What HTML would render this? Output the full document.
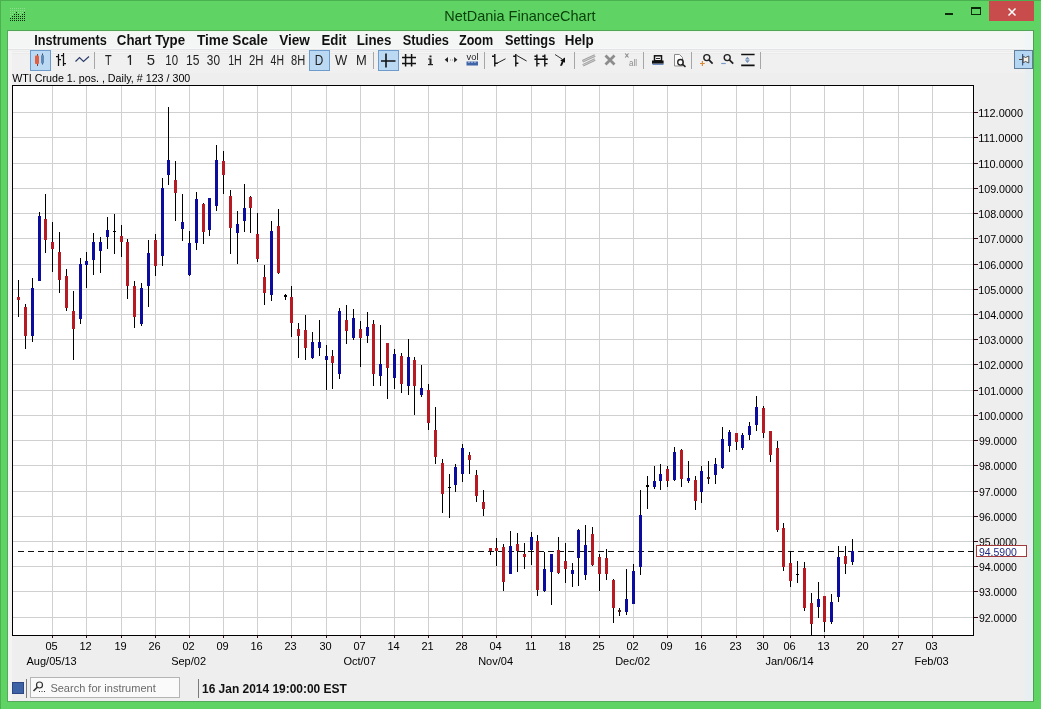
<!DOCTYPE html>
<html><head><meta charset="utf-8"><style>
html,body{margin:0;padding:0;width:1041px;height:709px;overflow:hidden;background:#5fd464;}
svg{position:absolute;left:0;top:0;display:block;will-change:transform}
svg text{font-family:"Liberation Sans", sans-serif;}
</style></head><body>
<svg width="1041" height="709" viewBox="0 0 1041 709">
<rect x="0" y="0" width="1041" height="709" fill="#5fd464"/>
<rect x="0" y="0" width="1041" height="1" fill="#4bb050"/>
<rect x="0" y="0" width="1" height="709" fill="#4bb050"/>
<rect x="8" y="30" width="1025" height="1" fill="#52a456"/>
<rect x="8" y="31" width="1025" height="670" fill="#eeeeee"/>
<rect x="7" y="30" width="1" height="672" fill="#56a85a"/>
<rect x="1033" y="30" width="1" height="672" fill="#4f9f53"/>
<rect x="7" y="701" width="1027" height="1" fill="#56a85a"/>
<rect x="10" y="8" width="1" height="1" fill="#8ee08e"/>
<rect x="12" y="8" width="1" height="1" fill="#8ee08e"/>
<rect x="14" y="8" width="1" height="1" fill="#8ee08e"/>
<rect x="16" y="8" width="1" height="1" fill="#8ee08e"/>
<rect x="18" y="8" width="1" height="1" fill="#8ee08e"/>
<rect x="20" y="8" width="1" height="1" fill="#8ee08e"/>
<rect x="22" y="8" width="1" height="1" fill="#8ee08e"/>
<rect x="24" y="8" width="1" height="1" fill="#8ee08e"/>
<rect x="10" y="10" width="1" height="1" fill="#8ee08e"/>
<rect x="12" y="10" width="1" height="1" fill="#8ee08e"/>
<rect x="14" y="10" width="1" height="1" fill="#8ee08e"/>
<rect x="16" y="10" width="1" height="1" fill="#8ee08e"/>
<rect x="18" y="10" width="1" height="1" fill="#8ee08e"/>
<rect x="20" y="10" width="1" height="1" fill="#8ee08e"/>
<rect x="22" y="10" width="1" height="1" fill="#8ee08e"/>
<rect x="24" y="10" width="1" height="1" fill="#8ee08e"/>
<rect x="10" y="12" width="1" height="1" fill="#8ee08e"/>
<rect x="12" y="12" width="1" height="1" fill="#8ee08e"/>
<rect x="14" y="12" width="1" height="1" fill="#8ee08e"/>
<rect x="18" y="12" width="1" height="1" fill="#8ee08e"/>
<rect x="20" y="12" width="1" height="1" fill="#8ee08e"/>
<rect x="22" y="12" width="1" height="1" fill="#8ee08e"/>
<rect x="10" y="14" width="1" height="1" fill="#8ee08e"/>
<rect x="12" y="14" width="1" height="1" fill="#8ee08e"/>
<rect x="20" y="14" width="1" height="1" fill="#8ee08e"/>
<rect x="10" y="16" width="1" height="1" fill="#8ee08e"/>
<rect x="16" y="12" width="1" height="1" fill="#022802"/>
<rect x="24" y="12" width="1" height="1" fill="#022802"/>
<rect x="14" y="14" width="1" height="1" fill="#022802"/>
<rect x="16" y="14" width="1" height="1" fill="#022802"/>
<rect x="18" y="14" width="1" height="1" fill="#022802"/>
<rect x="22" y="14" width="1" height="1" fill="#022802"/>
<rect x="24" y="14" width="1" height="1" fill="#022802"/>
<rect x="12" y="16" width="1" height="1" fill="#022802"/>
<rect x="14" y="16" width="1" height="1" fill="#022802"/>
<rect x="16" y="16" width="1" height="1" fill="#022802"/>
<rect x="18" y="16" width="1" height="1" fill="#022802"/>
<rect x="20" y="16" width="1" height="1" fill="#022802"/>
<rect x="22" y="16" width="1" height="1" fill="#022802"/>
<rect x="24" y="16" width="1" height="1" fill="#022802"/>
<rect x="10" y="18" width="1" height="1" fill="#022802"/>
<rect x="12" y="18" width="1" height="1" fill="#022802"/>
<rect x="14" y="18" width="1" height="1" fill="#022802"/>
<rect x="16" y="18" width="1" height="1" fill="#022802"/>
<rect x="18" y="18" width="1" height="1" fill="#022802"/>
<rect x="20" y="18" width="1" height="1" fill="#022802"/>
<rect x="22" y="18" width="1" height="1" fill="#022802"/>
<rect x="24" y="18" width="1" height="1" fill="#022802"/>
<rect x="10" y="20" width="1" height="1" fill="#022802"/>
<rect x="12" y="20" width="1" height="1" fill="#022802"/>
<rect x="14" y="20" width="1" height="1" fill="#022802"/>
<rect x="16" y="20" width="1" height="1" fill="#022802"/>
<rect x="18" y="20" width="1" height="1" fill="#022802"/>
<rect x="20" y="20" width="1" height="1" fill="#022802"/>
<rect x="22" y="20" width="1" height="1" fill="#022802"/>
<rect x="24" y="20" width="1" height="1" fill="#022802"/>
<rect x="945" y="13" width="8" height="2" fill="#0a2a0a"/>
<rect x="971.5" y="7.5" width="9" height="7" fill="none" stroke="#0a2a0a" stroke-width="1"/>
<rect x="971" y="7" width="10" height="2" fill="#0a2a0a"/>
<rect x="989" y="1" width="45" height="20" fill="#c94c4c"/>
<path d="M1008.5 8.5 L1015.5 15.5 M1015.5 8.5 L1008.5 15.5" stroke="#fff" stroke-width="1.5"/>
<rect x="8" y="31" width="1025" height="18" fill="#f4f6f5"/>
<rect x="8" y="31" width="1025" height="1" fill="#eef8ea"/>
<rect x="8" y="49" width="1025" height="1" fill="#e3e4e5"/>
<rect x="8" y="51" width="1025" height="22" fill="#f0f0f0"/>
<rect x="8" y="48" width="1025" height="1" fill="#f7f8f8"/>
<rect x="8" y="50" width="1025" height="1" fill="#f2f2f2"/>
<rect x="8" y="51" width="1025" height="1" fill="#ececec"/>
<rect x="8" y="52" width="1025" height="1" fill="#f5f5f5"/>
<rect x="8" y="53" width="1025" height="1" fill="#eaeaea"/>
<rect x="1025" y="31" width="8" height="670" fill="#e8eff2"/>
<rect x="1025" y="31" width="8" height="18" fill="#f0f6f8"/>
<rect x="30.5" y="50.5" width="20" height="20" fill="#bcd9f4" stroke="#6d9bcb" stroke-width="1"/>
<rect x="309.5" y="50.5" width="20" height="20" fill="#bcd9f4" stroke="#6d9bcb" stroke-width="1"/>
<rect x="378.5" y="50.5" width="20" height="20" fill="#bcd9f4" stroke="#6d9bcb" stroke-width="1"/>
<rect x="1014.5" y="50.5" width="18" height="18" fill="#b4d6f2" stroke="#5f7f9c" stroke-width="1"/>
<rect x="94" y="52" width="1" height="17" fill="#a6a6a6"/>
<rect x="373" y="52" width="1" height="17" fill="#a6a6a6"/>
<rect x="484" y="52" width="1" height="17" fill="#a6a6a6"/>
<rect x="574" y="52" width="1" height="17" fill="#a6a6a6"/>
<rect x="643" y="52" width="1" height="17" fill="#a6a6a6"/>
<rect x="691" y="52" width="1" height="17" fill="#a6a6a6"/>
<rect x="760" y="52" width="1" height="17" fill="#a6a6a6"/>
<rect x="37" y="54" width="1" height="12" fill="#7a3a30"/><rect x="35" y="55.5" width="4" height="8.5" rx="1" fill="#e2603f"/>
<rect x="42" y="53.5" width="1" height="11" fill="#3a4a6a"/><rect x="41" y="55" width="3" height="8.5" rx="1" fill="#5f8ab8"/>
<path d="M58.5 54 V66 M56 56.5 H58.5 M58.5 59.5 H61 M63.5 53 V66 M61 55.5 H63.5 M63.5 63.5 H66" stroke="#111" stroke-width="1.25" fill="none"/>
<path d="M75.5 61.5 L79.5 57.5 L83.5 61.5 L89 56.5" stroke="#2a3c68" stroke-width="1.15" fill="none"/>
<path d="M381 61 H395.5 M386 53.5 V67.5" stroke="#111" stroke-width="1.6"/>
<path d="M405.6 54 V66.6 M411.6 54 V66.6 M402 57.5 H416 M402 63.5 H416" stroke="#111" stroke-width="1.5"/>
<rect x="429.5" y="55.5" width="2" height="1.8" fill="#222"/><rect x="429.5" y="58.5" width="2" height="6.5" fill="#222"/><rect x="428" y="64" width="5" height="1.2" fill="#222"/><rect x="428" y="58.5" width="2" height="1" fill="#222"/>
<path d="M444.7 59.7 L448 57 V62.4 Z M457.4 59.7 L454.1 57 V62.4 Z" fill="#222"/><rect x="450" y="59.5" width="1" height="1" fill="#888"/><rect x="452" y="59.5" width="1" height="1" fill="#888"/>
<text x="472.5" y="59.5" font-size="8.5" text-anchor="middle" fill="#222" font-family='"Liberation Sans", sans-serif' textLength="12" lengthAdjust="spacingAndGlyphs">vol</text>
<rect x="466.5" y="61.5" width="11.5" height="4" fill="#3f64a8"/><path d="M469 61.5 V63 M472 61.5 V63 M475 61.5 V63" stroke="#e8eef8" stroke-width="0.9"/>
<path d="M494.8 54 V66.5 M492 56.2 H494.8 M494.8 63.2 H497.7" stroke="#111" stroke-width="1.4" fill="none"/><path d="M496.5 63.5 L505.5 58.8" stroke="#222" stroke-width="1"/>
<path d="M515.8 54 V66.5 M513.2 56.2 H515.8 M515.8 63.2 H518.4" stroke="#111" stroke-width="1.4" fill="none"/><path d="M516.5 55.3 L526.6 61" stroke="#222" stroke-width="1"/>
<path d="M536.9 54.5 V66.5 M544.8 54.5 V66.5 M534.4 59.2 H547.8 M534.4 56.2 H536.9 M542.3 56.2 H544.8 M536.9 63.6 H539.5 M544.8 63.6 H547.5" stroke="#111" stroke-width="1.4" fill="none"/>
<path d="M555 54.5 L562 59" stroke="#222" stroke-width="0.9"/><path d="M565 57.5 L560.2 60.5 L561.8 61.3 L560 65.7 L562 65.7 L563.6 62 L565 62.8 Z" fill="#111"/>
<path d="M582.5 61.3 L595 55.5 M582.9 65.3 L595 59.5" stroke="#a0a0a0" stroke-width="2.6"/><path d="M582.5 61.3 L595 55.5 M582.9 65.3 L595 59.5" stroke="#dcdcdc" stroke-width="0.7"/>
<path d="M605.5 55.5 L614.5 64.5 M614.5 55.5 L605.5 64.5" stroke="#8c8c8c" stroke-width="2.8"/>
<path d="M625.2 53.5 L628.5 57.5 M628.5 53.5 L625.2 57.5" stroke="#8a8a8a" stroke-width="1.1"/>
<text x="629" y="66" font-size="9.5" fill="#8a8a8a" font-family='"Liberation Sans", sans-serif' textLength="8" lengthAdjust="spacingAndGlyphs">all</text>
<rect x="654.5" y="55.8" width="7" height="5" fill="#f4f4f4" stroke="#111" stroke-width="1.5"/><rect x="652" y="60.5" width="11.6" height="3.2" fill="#111"/><rect x="656" y="58" width="4" height="0.9" fill="#111"/><rect x="652.5" y="63.7" width="11" height="1.3" fill="#6a8ac0"/>
<path d="M674.5 54.5 H679.5 L682.5 57.5 V66 H674.5 Z" fill="#fbfbfb" stroke="#8a8a8a" stroke-width="1"/>
<circle cx="680.5" cy="62.3" r="2.8" fill="none" stroke="#222" stroke-width="1.3"/><path d="M682.6 64.4 L685.5 66.8" stroke="#222" stroke-width="1.6"/>
<circle cx="706.8" cy="57.6" r="3" fill="none" stroke="#222" stroke-width="1.4"/><path d="M709 59.8 L712.6 63.6" stroke="#222" stroke-width="1.7"/>
<path d="M700 63.5 H704.8 M702.4 61 V66" stroke="#d88a3a" stroke-width="1.2"/>
<circle cx="727.2" cy="57.6" r="3" fill="none" stroke="#222" stroke-width="1.4"/><path d="M729.4 59.8 L733.2 63.6" stroke="#222" stroke-width="1.7"/>
<path d="M721.2 63.5 H725.8" stroke="#7898c8" stroke-width="1.2"/>
<path d="M741.2 54.5 H754.6 M741.2 65.3 H754.6" stroke="#111" stroke-width="1.7"/><path d="M747.4 56.8 L745 59.5 H749.8 Z M747.4 63 L745 60.3 H749.8 Z" fill="#7090b8"/>
<path d="M1019 59.5 H1022.5" stroke="#5a4a40" stroke-width="1"/><rect x="1022" y="54" width="1.2" height="11.4" fill="#3a5a80"/>
<path d="M1023.2 56.2 L1025.5 57.5 L1028.8 56 V63 L1025.5 61.5 L1023.2 62.8 Z" fill="#f4f0e6" stroke="#444" stroke-width="0.9"/>
<rect x="8" y="51" width="1" height="650" fill="#eef6ee"/>
<rect x="9" y="51" width="3" height="650" fill="#f4f4f4"/>
<rect x="12" y="85" width="961" height="550" fill="#fff"/>
<rect x="52" y="86" width="1" height="549" fill="#d0d0d0"/>
<rect x="86" y="86" width="1" height="549" fill="#d0d0d0"/>
<rect x="121" y="86" width="1" height="549" fill="#d0d0d0"/>
<rect x="155" y="86" width="1" height="549" fill="#d0d0d0"/>
<rect x="189" y="86" width="1" height="549" fill="#d0d0d0"/>
<rect x="223" y="86" width="1" height="549" fill="#d0d0d0"/>
<rect x="257" y="86" width="1" height="549" fill="#d0d0d0"/>
<rect x="291" y="86" width="1" height="549" fill="#d0d0d0"/>
<rect x="326" y="86" width="1" height="549" fill="#d0d0d0"/>
<rect x="360" y="86" width="1" height="549" fill="#d0d0d0"/>
<rect x="394" y="86" width="1" height="549" fill="#d0d0d0"/>
<rect x="428" y="86" width="1" height="549" fill="#d0d0d0"/>
<rect x="462" y="86" width="1" height="549" fill="#d0d0d0"/>
<rect x="496" y="86" width="1" height="549" fill="#d0d0d0"/>
<rect x="531" y="86" width="1" height="549" fill="#d0d0d0"/>
<rect x="565" y="86" width="1" height="549" fill="#d0d0d0"/>
<rect x="599" y="86" width="1" height="549" fill="#d0d0d0"/>
<rect x="633" y="86" width="1" height="549" fill="#d0d0d0"/>
<rect x="667" y="86" width="1" height="549" fill="#d0d0d0"/>
<rect x="701" y="86" width="1" height="549" fill="#d0d0d0"/>
<rect x="736" y="86" width="1" height="549" fill="#d0d0d0"/>
<rect x="763" y="86" width="1" height="549" fill="#d0d0d0"/>
<rect x="790" y="86" width="1" height="549" fill="#d0d0d0"/>
<rect x="824" y="86" width="1" height="549" fill="#d0d0d0"/>
<rect x="863" y="86" width="1" height="549" fill="#d0d0d0"/>
<rect x="898" y="86" width="1" height="549" fill="#d0d0d0"/>
<rect x="932" y="86" width="1" height="549" fill="#d0d0d0"/>
<rect x="13" y="112" width="960" height="1" fill="#d0d0d0"/>
<rect x="13" y="137" width="960" height="1" fill="#d0d0d0"/>
<rect x="13" y="163" width="960" height="1" fill="#d0d0d0"/>
<rect x="13" y="188" width="960" height="1" fill="#d0d0d0"/>
<rect x="13" y="213" width="960" height="1" fill="#d0d0d0"/>
<rect x="13" y="238" width="960" height="1" fill="#d0d0d0"/>
<rect x="13" y="264" width="960" height="1" fill="#d0d0d0"/>
<rect x="13" y="289" width="960" height="1" fill="#d0d0d0"/>
<rect x="13" y="314" width="960" height="1" fill="#d0d0d0"/>
<rect x="13" y="339" width="960" height="1" fill="#d0d0d0"/>
<rect x="13" y="364" width="960" height="1" fill="#d0d0d0"/>
<rect x="13" y="390" width="960" height="1" fill="#d0d0d0"/>
<rect x="13" y="415" width="960" height="1" fill="#d0d0d0"/>
<rect x="13" y="440" width="960" height="1" fill="#d0d0d0"/>
<rect x="13" y="465" width="960" height="1" fill="#d0d0d0"/>
<rect x="13" y="491" width="960" height="1" fill="#d0d0d0"/>
<rect x="13" y="516" width="960" height="1" fill="#d0d0d0"/>
<rect x="13" y="541" width="960" height="1" fill="#d0d0d0"/>
<rect x="13" y="566" width="960" height="1" fill="#d0d0d0"/>
<rect x="13" y="591" width="960" height="1" fill="#d0d0d0"/>
<rect x="13" y="617" width="960" height="1" fill="#d0d0d0"/>
<line x1="18" y1="551.5" x2="973" y2="551.5" stroke="#111" stroke-width="1" stroke-dasharray="6,4"/>
<rect x="18" y="280" width="1" height="37" fill="#000"/>
<rect x="17" y="297" width="3" height="3" fill="#b61a22"/>
<rect x="25" y="304" width="1" height="45" fill="#000"/>
<rect x="24" y="307" width="3" height="29" fill="#b61a22"/>
<rect x="32" y="278" width="1" height="64" fill="#000"/>
<rect x="31" y="288" width="3" height="48" fill="#0c0c9e"/>
<rect x="39" y="212" width="1" height="69" fill="#000"/>
<rect x="38" y="216" width="3" height="65" fill="#0c0c9e"/>
<rect x="45" y="194" width="1" height="59" fill="#000"/>
<rect x="44" y="219" width="3" height="21" fill="#b61a22"/>
<rect x="52" y="222" width="1" height="50" fill="#000"/>
<rect x="51" y="242" width="3" height="7" fill="#b61a22"/>
<rect x="59" y="232" width="1" height="61" fill="#000"/>
<rect x="58" y="252" width="3" height="28" fill="#b61a22"/>
<rect x="66" y="269" width="1" height="42" fill="#000"/>
<rect x="65" y="276" width="3" height="32" fill="#b61a22"/>
<rect x="73" y="291" width="1" height="69" fill="#000"/>
<rect x="72" y="311" width="3" height="18" fill="#b61a22"/>
<rect x="80" y="258" width="1" height="66" fill="#000"/>
<rect x="79" y="264" width="3" height="55" fill="#0c0c9e"/>
<rect x="86" y="252" width="1" height="36" fill="#000"/>
<rect x="85" y="261" width="3" height="4" fill="#0c0c9e"/>
<rect x="93" y="233" width="1" height="42" fill="#000"/>
<rect x="92" y="242" width="3" height="18" fill="#0c0c9e"/>
<rect x="100" y="237" width="1" height="36" fill="#000"/>
<rect x="99" y="242" width="3" height="9" fill="#0c0c9e"/>
<rect x="107" y="217" width="1" height="32" fill="#000"/>
<rect x="106" y="230" width="3" height="7" fill="#0c0c9e"/>
<rect x="114" y="214" width="1" height="40" fill="#000"/>
<rect x="113" y="231" width="3" height="1" fill="#000"/>
<rect x="121" y="225" width="1" height="32" fill="#000"/>
<rect x="120" y="236" width="3" height="6" fill="#b61a22"/>
<rect x="127" y="239" width="1" height="60" fill="#000"/>
<rect x="126" y="242" width="3" height="44" fill="#b61a22"/>
<rect x="134" y="281" width="1" height="47" fill="#000"/>
<rect x="133" y="286" width="3" height="31" fill="#b61a22"/>
<rect x="141" y="283" width="1" height="43" fill="#000"/>
<rect x="140" y="288" width="3" height="36" fill="#0c0c9e"/>
<rect x="148" y="240" width="1" height="67" fill="#000"/>
<rect x="147" y="253" width="3" height="33" fill="#0c0c9e"/>
<rect x="155" y="234" width="1" height="42" fill="#000"/>
<rect x="154" y="240" width="3" height="26" fill="#b61a22"/>
<rect x="162" y="178" width="1" height="88" fill="#000"/>
<rect x="161" y="188" width="3" height="68" fill="#0c0c9e"/>
<rect x="168" y="107" width="1" height="78" fill="#000"/>
<rect x="167" y="160" width="3" height="15" fill="#0c0c9e"/>
<rect x="175" y="161" width="1" height="60" fill="#000"/>
<rect x="174" y="180" width="3" height="13" fill="#b61a22"/>
<rect x="182" y="194" width="1" height="47" fill="#000"/>
<rect x="181" y="222" width="3" height="7" fill="#0c0c9e"/>
<rect x="189" y="231" width="1" height="45" fill="#000"/>
<rect x="188" y="243" width="3" height="32" fill="#0c0c9e"/>
<rect x="196" y="192" width="1" height="58" fill="#000"/>
<rect x="195" y="199" width="3" height="44" fill="#0c0c9e"/>
<rect x="203" y="203" width="1" height="41" fill="#000"/>
<rect x="202" y="204" width="3" height="28" fill="#b61a22"/>
<rect x="209" y="198" width="1" height="38" fill="#000"/>
<rect x="208" y="198" width="3" height="32" fill="#0c0c9e"/>
<rect x="216" y="145" width="1" height="66" fill="#000"/>
<rect x="215" y="160" width="3" height="46" fill="#0c0c9e"/>
<rect x="223" y="151" width="1" height="43" fill="#000"/>
<rect x="222" y="161" width="3" height="14" fill="#b61a22"/>
<rect x="230" y="190" width="1" height="64" fill="#000"/>
<rect x="229" y="196" width="3" height="32" fill="#b61a22"/>
<rect x="237" y="211" width="1" height="53" fill="#000"/>
<rect x="236" y="224" width="3" height="9" fill="#0c0c9e"/>
<rect x="244" y="184" width="1" height="48" fill="#000"/>
<rect x="243" y="208" width="3" height="13" fill="#0c0c9e"/>
<rect x="250" y="196" width="1" height="37" fill="#000"/>
<rect x="249" y="197" width="3" height="11" fill="#b61a22"/>
<rect x="257" y="213" width="1" height="49" fill="#000"/>
<rect x="256" y="234" width="3" height="25" fill="#b61a22"/>
<rect x="264" y="265" width="1" height="40" fill="#000"/>
<rect x="263" y="277" width="3" height="16" fill="#b61a22"/>
<rect x="271" y="221" width="1" height="80" fill="#000"/>
<rect x="270" y="231" width="3" height="64" fill="#0c0c9e"/>
<rect x="278" y="209" width="1" height="65" fill="#000"/>
<rect x="277" y="226" width="3" height="47" fill="#b61a22"/>
<rect x="285" y="294" width="1" height="6" fill="#000"/>
<rect x="284" y="295" width="3" height="2" fill="#000"/>
<rect x="291" y="286" width="1" height="51" fill="#000"/>
<rect x="290" y="297" width="3" height="26" fill="#b61a22"/>
<rect x="298" y="323" width="1" height="35" fill="#000"/>
<rect x="297" y="329" width="3" height="7" fill="#b61a22"/>
<rect x="305" y="315" width="1" height="45" fill="#000"/>
<rect x="304" y="330" width="3" height="18" fill="#b61a22"/>
<rect x="312" y="332" width="1" height="27" fill="#000"/>
<rect x="311" y="342" width="3" height="16" fill="#0c0c9e"/>
<rect x="319" y="320" width="1" height="36" fill="#000"/>
<rect x="318" y="342" width="3" height="6" fill="#0c0c9e"/>
<rect x="326" y="345" width="1" height="45" fill="#000"/>
<rect x="325" y="356" width="3" height="4" fill="#0c0c9e"/>
<rect x="332" y="350" width="1" height="39" fill="#000"/>
<rect x="331" y="356" width="3" height="7" fill="#b61a22"/>
<rect x="339" y="308" width="1" height="71" fill="#000"/>
<rect x="338" y="311" width="3" height="63" fill="#0c0c9e"/>
<rect x="346" y="305" width="1" height="39" fill="#000"/>
<rect x="345" y="320" width="3" height="11" fill="#b61a22"/>
<rect x="353" y="309" width="1" height="31" fill="#000"/>
<rect x="352" y="318" width="3" height="20" fill="#0c0c9e"/>
<rect x="360" y="321" width="1" height="46" fill="#000"/>
<rect x="359" y="329" width="3" height="9" fill="#b61a22"/>
<rect x="367" y="312" width="1" height="31" fill="#000"/>
<rect x="366" y="327" width="3" height="9" fill="#0c0c9e"/>
<rect x="373" y="320" width="1" height="66" fill="#000"/>
<rect x="372" y="324" width="3" height="50" fill="#b61a22"/>
<rect x="380" y="325" width="1" height="61" fill="#000"/>
<rect x="379" y="364" width="3" height="12" fill="#0c0c9e"/>
<rect x="387" y="343" width="1" height="56" fill="#000"/>
<rect x="386" y="343" width="3" height="25" fill="#b61a22"/>
<rect x="394" y="349" width="1" height="40" fill="#000"/>
<rect x="393" y="354" width="3" height="24" fill="#0c0c9e"/>
<rect x="401" y="353" width="1" height="40" fill="#000"/>
<rect x="400" y="356" width="3" height="28" fill="#b61a22"/>
<rect x="408" y="339" width="1" height="56" fill="#000"/>
<rect x="407" y="357" width="3" height="29" fill="#0c0c9e"/>
<rect x="414" y="357" width="1" height="58" fill="#000"/>
<rect x="413" y="360" width="3" height="26" fill="#b61a22"/>
<rect x="421" y="365" width="1" height="32" fill="#000"/>
<rect x="420" y="388" width="3" height="7" fill="#0c0c9e"/>
<rect x="428" y="384" width="1" height="46" fill="#000"/>
<rect x="427" y="390" width="3" height="33" fill="#b61a22"/>
<rect x="435" y="407" width="1" height="57" fill="#000"/>
<rect x="434" y="430" width="3" height="27" fill="#b61a22"/>
<rect x="442" y="459" width="1" height="54" fill="#000"/>
<rect x="441" y="463" width="3" height="31" fill="#b61a22"/>
<rect x="449" y="474" width="1" height="44" fill="#000"/>
<rect x="448" y="487" width="3" height="1" fill="#000"/>
<rect x="455" y="464" width="1" height="28" fill="#000"/>
<rect x="454" y="467" width="3" height="18" fill="#0c0c9e"/>
<rect x="462" y="444" width="1" height="38" fill="#000"/>
<rect x="461" y="448" width="3" height="26" fill="#0c0c9e"/>
<rect x="469" y="452" width="1" height="22" fill="#000"/>
<rect x="468" y="455" width="3" height="5" fill="#b61a22"/>
<rect x="476" y="470" width="1" height="32" fill="#000"/>
<rect x="475" y="475" width="3" height="21" fill="#b61a22"/>
<rect x="483" y="490" width="1" height="26" fill="#000"/>
<rect x="482" y="502" width="3" height="7" fill="#b61a22"/>
<rect x="490" y="548" width="1" height="7" fill="#000"/>
<rect x="489" y="548" width="3" height="3" fill="#b61a22"/>
<rect x="496" y="538" width="1" height="28" fill="#000"/>
<rect x="495" y="548" width="3" height="3" fill="#b61a22"/>
<rect x="503" y="544" width="1" height="47" fill="#000"/>
<rect x="502" y="547" width="3" height="35" fill="#b61a22"/>
<rect x="510" y="531" width="1" height="43" fill="#000"/>
<rect x="509" y="546" width="3" height="28" fill="#0c0c9e"/>
<rect x="517" y="533" width="1" height="39" fill="#000"/>
<rect x="516" y="544" width="3" height="7" fill="#b61a22"/>
<rect x="524" y="543" width="1" height="26" fill="#000"/>
<rect x="523" y="554" width="3" height="3" fill="#b61a22"/>
<rect x="531" y="532" width="1" height="33" fill="#000"/>
<rect x="530" y="537" width="3" height="13" fill="#0c0c9e"/>
<rect x="537" y="535" width="1" height="61" fill="#000"/>
<rect x="536" y="541" width="3" height="49" fill="#b61a22"/>
<rect x="544" y="552" width="1" height="40" fill="#000"/>
<rect x="543" y="569" width="3" height="22" fill="#0c0c9e"/>
<rect x="551" y="554" width="1" height="51" fill="#000"/>
<rect x="550" y="554" width="3" height="18" fill="#0c0c9e"/>
<rect x="558" y="537" width="1" height="37" fill="#000"/>
<rect x="557" y="550" width="3" height="23" fill="#b61a22"/>
<rect x="565" y="543" width="1" height="40" fill="#000"/>
<rect x="564" y="561" width="3" height="8" fill="#b61a22"/>
<rect x="572" y="563" width="1" height="24" fill="#000"/>
<rect x="571" y="570" width="3" height="4" fill="#0c0c9e"/>
<rect x="578" y="529" width="1" height="57" fill="#000"/>
<rect x="577" y="530" width="3" height="28" fill="#0c0c9e"/>
<rect x="585" y="525" width="1" height="55" fill="#000"/>
<rect x="584" y="545" width="3" height="30" fill="#0c0c9e"/>
<rect x="592" y="527" width="1" height="39" fill="#000"/>
<rect x="591" y="534" width="3" height="31" fill="#b61a22"/>
<rect x="599" y="554" width="1" height="37" fill="#000"/>
<rect x="598" y="557" width="3" height="17" fill="#b61a22"/>
<rect x="606" y="549" width="1" height="31" fill="#000"/>
<rect x="605" y="558" width="3" height="16" fill="#b61a22"/>
<rect x="613" y="579" width="1" height="44" fill="#000"/>
<rect x="612" y="580" width="3" height="28" fill="#b61a22"/>
<rect x="619" y="608" width="1" height="8" fill="#000"/>
<rect x="618" y="610" width="3" height="2" fill="#4a2418"/>
<rect x="626" y="569" width="1" height="46" fill="#000"/>
<rect x="625" y="599" width="3" height="13" fill="#0c0c9e"/>
<rect x="633" y="564" width="1" height="40" fill="#000"/>
<rect x="632" y="571" width="3" height="33" fill="#0c0c9e"/>
<rect x="640" y="490" width="1" height="85" fill="#000"/>
<rect x="639" y="515" width="3" height="52" fill="#0c0c9e"/>
<rect x="647" y="476" width="1" height="33" fill="#000"/>
<rect x="646" y="485" width="3" height="2" fill="#000"/>
<rect x="654" y="466" width="1" height="23" fill="#000"/>
<rect x="653" y="481" width="3" height="6" fill="#0c0c9e"/>
<rect x="660" y="464" width="1" height="26" fill="#000"/>
<rect x="659" y="474" width="3" height="7" fill="#0c0c9e"/>
<rect x="667" y="466" width="1" height="21" fill="#000"/>
<rect x="666" y="469" width="3" height="12" fill="#b61a22"/>
<rect x="674" y="447" width="1" height="34" fill="#000"/>
<rect x="673" y="452" width="3" height="28" fill="#0c0c9e"/>
<rect x="681" y="449" width="1" height="38" fill="#000"/>
<rect x="680" y="450" width="3" height="29" fill="#b61a22"/>
<rect x="688" y="461" width="1" height="22" fill="#000"/>
<rect x="687" y="478" width="3" height="3" fill="#0c0c9e"/>
<rect x="695" y="476" width="1" height="34" fill="#000"/>
<rect x="694" y="480" width="3" height="21" fill="#b61a22"/>
<rect x="701" y="466" width="1" height="37" fill="#000"/>
<rect x="700" y="471" width="3" height="21" fill="#0c0c9e"/>
<rect x="708" y="461" width="1" height="23" fill="#000"/>
<rect x="707" y="477" width="3" height="2" fill="#4a2418"/>
<rect x="715" y="458" width="1" height="26" fill="#000"/>
<rect x="714" y="464" width="3" height="11" fill="#0c0c9e"/>
<rect x="722" y="427" width="1" height="42" fill="#000"/>
<rect x="721" y="439" width="3" height="29" fill="#0c0c9e"/>
<rect x="729" y="430" width="1" height="22" fill="#000"/>
<rect x="728" y="432" width="3" height="14" fill="#0c0c9e"/>
<rect x="736" y="433" width="1" height="17" fill="#000"/>
<rect x="735" y="433" width="3" height="9" fill="#b61a22"/>
<rect x="742" y="433" width="1" height="17" fill="#000"/>
<rect x="741" y="435" width="3" height="13" fill="#0c0c9e"/>
<rect x="749" y="422" width="1" height="18" fill="#000"/>
<rect x="748" y="426" width="3" height="9" fill="#0c0c9e"/>
<rect x="756" y="396" width="1" height="35" fill="#000"/>
<rect x="755" y="407" width="3" height="18" fill="#0c0c9e"/>
<rect x="763" y="406" width="1" height="32" fill="#000"/>
<rect x="762" y="408" width="3" height="25" fill="#b61a22"/>
<rect x="770" y="431" width="1" height="31" fill="#000"/>
<rect x="769" y="431" width="3" height="24" fill="#b61a22"/>
<rect x="777" y="441" width="1" height="91" fill="#000"/>
<rect x="776" y="448" width="3" height="82" fill="#b61a22"/>
<rect x="783" y="523" width="1" height="48" fill="#000"/>
<rect x="782" y="528" width="3" height="39" fill="#b61a22"/>
<rect x="790" y="551" width="1" height="36" fill="#000"/>
<rect x="789" y="563" width="3" height="18" fill="#b61a22"/>
<rect x="797" y="561" width="1" height="22" fill="#000"/>
<rect x="796" y="574" width="3" height="1" fill="#000"/>
<rect x="804" y="562" width="1" height="49" fill="#000"/>
<rect x="803" y="568" width="3" height="40" fill="#b61a22"/>
<rect x="811" y="593" width="1" height="42" fill="#000"/>
<rect x="810" y="603" width="3" height="21" fill="#b61a22"/>
<rect x="818" y="582" width="1" height="36" fill="#000"/>
<rect x="817" y="599" width="3" height="8" fill="#0c0c9e"/>
<rect x="824" y="596" width="1" height="36" fill="#000"/>
<rect x="823" y="596" width="3" height="26" fill="#b61a22"/>
<rect x="831" y="594" width="1" height="30" fill="#000"/>
<rect x="830" y="602" width="3" height="20" fill="#0c0c9e"/>
<rect x="838" y="546" width="1" height="56" fill="#000"/>
<rect x="837" y="557" width="3" height="40" fill="#0c0c9e"/>
<rect x="845" y="546" width="1" height="28" fill="#000"/>
<rect x="844" y="556" width="3" height="8" fill="#b61a22"/>
<rect x="852" y="539" width="1" height="26" fill="#000"/>
<rect x="851" y="551" width="3" height="11" fill="#0c0c9e"/>
<rect x="12.5" y="85.5" width="961" height="550" fill="none" stroke="#000" stroke-width="1"/>
<rect x="974" y="112" width="4" height="1" fill="#3a0a10"/>
<text x="978.2" y="117" font-size="11" fill="#000" textLength="44.8" lengthAdjust="spacingAndGlyphs">112.0000</text>
<rect x="974" y="137" width="4" height="1" fill="#3a0a10"/>
<text x="978.2" y="142" font-size="11" fill="#000" textLength="44.8" lengthAdjust="spacingAndGlyphs">111.0000</text>
<rect x="974" y="163" width="4" height="1" fill="#3a0a10"/>
<text x="978.2" y="168" font-size="11" fill="#000" textLength="44.8" lengthAdjust="spacingAndGlyphs">110.0000</text>
<rect x="974" y="188" width="4" height="1" fill="#3a0a10"/>
<text x="978.2" y="193" font-size="11" fill="#000" textLength="44.8" lengthAdjust="spacingAndGlyphs">109.0000</text>
<rect x="974" y="213" width="4" height="1" fill="#3a0a10"/>
<text x="978.2" y="218" font-size="11" fill="#000" textLength="44.8" lengthAdjust="spacingAndGlyphs">108.0000</text>
<rect x="974" y="238" width="4" height="1" fill="#3a0a10"/>
<text x="978.2" y="243" font-size="11" fill="#000" textLength="44.8" lengthAdjust="spacingAndGlyphs">107.0000</text>
<rect x="974" y="264" width="4" height="1" fill="#3a0a10"/>
<text x="978.2" y="269" font-size="11" fill="#000" textLength="44.8" lengthAdjust="spacingAndGlyphs">106.0000</text>
<rect x="974" y="289" width="4" height="1" fill="#3a0a10"/>
<text x="978.2" y="294" font-size="11" fill="#000" textLength="44.8" lengthAdjust="spacingAndGlyphs">105.0000</text>
<rect x="974" y="314" width="4" height="1" fill="#3a0a10"/>
<text x="978.2" y="319" font-size="11" fill="#000" textLength="44.8" lengthAdjust="spacingAndGlyphs">104.0000</text>
<rect x="974" y="339" width="4" height="1" fill="#3a0a10"/>
<text x="978.2" y="344" font-size="11" fill="#000" textLength="44.8" lengthAdjust="spacingAndGlyphs">103.0000</text>
<rect x="974" y="364" width="4" height="1" fill="#3a0a10"/>
<text x="978.2" y="369" font-size="11" fill="#000" textLength="44.8" lengthAdjust="spacingAndGlyphs">102.0000</text>
<rect x="974" y="390" width="4" height="1" fill="#3a0a10"/>
<text x="978.2" y="395" font-size="11" fill="#000" textLength="44.8" lengthAdjust="spacingAndGlyphs">101.0000</text>
<rect x="974" y="415" width="4" height="1" fill="#3a0a10"/>
<text x="978.2" y="420" font-size="11" fill="#000" textLength="44.8" lengthAdjust="spacingAndGlyphs">100.0000</text>
<rect x="974" y="440" width="4" height="1" fill="#3a0a10"/>
<text x="978.9" y="445" font-size="11" fill="#000" textLength="37.9" lengthAdjust="spacingAndGlyphs">99.0000</text>
<rect x="974" y="465" width="4" height="1" fill="#3a0a10"/>
<text x="978.9" y="470" font-size="11" fill="#000" textLength="37.9" lengthAdjust="spacingAndGlyphs">98.0000</text>
<rect x="974" y="491" width="4" height="1" fill="#3a0a10"/>
<text x="978.9" y="496" font-size="11" fill="#000" textLength="37.9" lengthAdjust="spacingAndGlyphs">97.0000</text>
<rect x="974" y="516" width="4" height="1" fill="#3a0a10"/>
<text x="978.9" y="521" font-size="11" fill="#000" textLength="37.9" lengthAdjust="spacingAndGlyphs">96.0000</text>
<rect x="974" y="541" width="4" height="1" fill="#3a0a10"/>
<text x="978.9" y="546" font-size="11" fill="#000" textLength="37.9" lengthAdjust="spacingAndGlyphs">95.0000</text>
<rect x="974" y="566" width="4" height="1" fill="#3a0a10"/>
<text x="978.9" y="571" font-size="11" fill="#000" textLength="37.9" lengthAdjust="spacingAndGlyphs">94.0000</text>
<rect x="974" y="591" width="4" height="1" fill="#3a0a10"/>
<text x="978.9" y="596" font-size="11" fill="#000" textLength="37.9" lengthAdjust="spacingAndGlyphs">93.0000</text>
<rect x="974" y="617" width="4" height="1" fill="#3a0a10"/>
<text x="978.9" y="622" font-size="11" fill="#000" textLength="37.9" lengthAdjust="spacingAndGlyphs">92.0000</text>
<rect x="976.5" y="545.5" width="50" height="11" fill="#fff" stroke="#a03a3a" stroke-width="1"/>
<text x="978.9" y="556" font-size="11" fill="#1e2a80" textLength="37.9" lengthAdjust="spacingAndGlyphs">94.5900</text>
<rect x="52" y="636" width="1" height="2" fill="#3a0a10"/>
<text x="51.6" y="650" font-size="11" text-anchor="middle" fill="#000">05</text>
<text x="51.6" y="665" font-size="11" text-anchor="middle" fill="#000">Aug/05/13</text>
<rect x="86" y="636" width="1" height="2" fill="#3a0a10"/>
<text x="85.6" y="650" font-size="11" text-anchor="middle" fill="#000">12</text>
<rect x="121" y="636" width="1" height="2" fill="#3a0a10"/>
<text x="120.6" y="650" font-size="11" text-anchor="middle" fill="#000">19</text>
<rect x="155" y="636" width="1" height="2" fill="#3a0a10"/>
<text x="154.6" y="650" font-size="11" text-anchor="middle" fill="#000">26</text>
<rect x="189" y="636" width="1" height="2" fill="#3a0a10"/>
<text x="188.6" y="650" font-size="11" text-anchor="middle" fill="#000">02</text>
<text x="188.6" y="665" font-size="11" text-anchor="middle" fill="#000">Sep/02</text>
<rect x="223" y="636" width="1" height="2" fill="#3a0a10"/>
<text x="222.6" y="650" font-size="11" text-anchor="middle" fill="#000">09</text>
<rect x="257" y="636" width="1" height="2" fill="#3a0a10"/>
<text x="256.6" y="650" font-size="11" text-anchor="middle" fill="#000">16</text>
<rect x="291" y="636" width="1" height="2" fill="#3a0a10"/>
<text x="290.6" y="650" font-size="11" text-anchor="middle" fill="#000">23</text>
<rect x="326" y="636" width="1" height="2" fill="#3a0a10"/>
<text x="325.6" y="650" font-size="11" text-anchor="middle" fill="#000">30</text>
<rect x="360" y="636" width="1" height="2" fill="#3a0a10"/>
<text x="359.6" y="650" font-size="11" text-anchor="middle" fill="#000">07</text>
<text x="359.6" y="665" font-size="11" text-anchor="middle" fill="#000">Oct/07</text>
<rect x="394" y="636" width="1" height="2" fill="#3a0a10"/>
<text x="393.6" y="650" font-size="11" text-anchor="middle" fill="#000">14</text>
<rect x="428" y="636" width="1" height="2" fill="#3a0a10"/>
<text x="427.6" y="650" font-size="11" text-anchor="middle" fill="#000">21</text>
<rect x="462" y="636" width="1" height="2" fill="#3a0a10"/>
<text x="461.6" y="650" font-size="11" text-anchor="middle" fill="#000">28</text>
<rect x="496" y="636" width="1" height="2" fill="#3a0a10"/>
<text x="495.6" y="650" font-size="11" text-anchor="middle" fill="#000">04</text>
<text x="495.6" y="665" font-size="11" text-anchor="middle" fill="#000">Nov/04</text>
<rect x="531" y="636" width="1" height="2" fill="#3a0a10"/>
<text x="530.6" y="650" font-size="11" text-anchor="middle" fill="#000">11</text>
<rect x="565" y="636" width="1" height="2" fill="#3a0a10"/>
<text x="564.6" y="650" font-size="11" text-anchor="middle" fill="#000">18</text>
<rect x="599" y="636" width="1" height="2" fill="#3a0a10"/>
<text x="598.6" y="650" font-size="11" text-anchor="middle" fill="#000">25</text>
<rect x="633" y="636" width="1" height="2" fill="#3a0a10"/>
<text x="632.6" y="650" font-size="11" text-anchor="middle" fill="#000">02</text>
<text x="632.6" y="665" font-size="11" text-anchor="middle" fill="#000">Dec/02</text>
<rect x="667" y="636" width="1" height="2" fill="#3a0a10"/>
<text x="666.6" y="650" font-size="11" text-anchor="middle" fill="#000">09</text>
<rect x="701" y="636" width="1" height="2" fill="#3a0a10"/>
<text x="700.6" y="650" font-size="11" text-anchor="middle" fill="#000">16</text>
<rect x="736" y="636" width="1" height="2" fill="#3a0a10"/>
<text x="735.6" y="650" font-size="11" text-anchor="middle" fill="#000">23</text>
<rect x="763" y="636" width="1" height="2" fill="#3a0a10"/>
<text x="762.6" y="650" font-size="11" text-anchor="middle" fill="#000">30</text>
<rect x="790" y="636" width="1" height="2" fill="#3a0a10"/>
<text x="789.6" y="650" font-size="11" text-anchor="middle" fill="#000">06</text>
<text x="789.6" y="665" font-size="11" text-anchor="middle" fill="#000">Jan/06/14</text>
<rect x="824" y="636" width="1" height="2" fill="#3a0a10"/>
<text x="823.6" y="650" font-size="11" text-anchor="middle" fill="#000">13</text>
<rect x="863" y="636" width="1" height="2" fill="#3a0a10"/>
<text x="862.6" y="650" font-size="11" text-anchor="middle" fill="#000">20</text>
<rect x="898" y="636" width="1" height="2" fill="#3a0a10"/>
<text x="897.6" y="650" font-size="11" text-anchor="middle" fill="#000">27</text>
<rect x="932" y="636" width="1" height="2" fill="#3a0a10"/>
<text x="931.6" y="650" font-size="11" text-anchor="middle" fill="#000">03</text>
<text x="931.6" y="665" font-size="11" text-anchor="middle" fill="#000">Feb/03</text>
<rect x="12.5" y="682.5" width="11" height="11" fill="#3d62a6" stroke="#2b4680" stroke-width="1"/>
<rect x="26" y="679" width="1" height="19" fill="#7a7a7a"/>
<rect x="30.5" y="677.5" width="149" height="20" fill="#fafafa" stroke="#b4b4b4" stroke-width="1"/>
<circle cx="39.5" cy="685" r="3" fill="none" stroke="#333" stroke-width="1.2"/><path d="M37.3 687.2 L33.5 691" stroke="#333" stroke-width="1.6"/>
<rect x="39" y="691" width="1" height="1" fill="#333"/><rect x="41.5" y="691" width="1" height="1" fill="#333"/><rect x="44" y="691" width="1" height="1" fill="#333"/>
<rect x="198" y="679" width="1" height="19" fill="#7a7a7a"/>
<path d="M130.4 55 V65 M127.8 57.4 L130.4 55.2" stroke="#222" stroke-width="1.3" fill="none"/>
<text x="444.2" y="21" font-size="14.5" font-weight="normal" fill="#0b420b" textLength="151.33" lengthAdjust="spacingAndGlyphs">NetDania FinanceChart</text>
<text x="34.19" y="45" font-size="14" font-weight="bold" fill="#111" textLength="72.52" lengthAdjust="spacingAndGlyphs">Instruments</text>
<text x="116.85" y="45" font-size="14" font-weight="bold" fill="#111" textLength="68.24" lengthAdjust="spacingAndGlyphs">Chart Type</text>
<text x="197.0" y="45" font-size="14" font-weight="bold" fill="#111" textLength="70.88" lengthAdjust="spacingAndGlyphs">Time Scale</text>
<text x="279.2" y="45" font-size="14" font-weight="bold" fill="#111" textLength="30.77" lengthAdjust="spacingAndGlyphs">View</text>
<text x="321.56" y="45" font-size="14" font-weight="bold" fill="#111" textLength="24.97" lengthAdjust="spacingAndGlyphs">Edit</text>
<text x="356.65" y="45" font-size="14" font-weight="bold" fill="#111" textLength="34.7" lengthAdjust="spacingAndGlyphs">Lines</text>
<text x="402.79" y="45" font-size="14" font-weight="bold" fill="#111" textLength="46.14" lengthAdjust="spacingAndGlyphs">Studies</text>
<text x="459.0" y="45" font-size="14" font-weight="bold" fill="#111" textLength="34.2" lengthAdjust="spacingAndGlyphs">Zoom</text>
<text x="505.09" y="45" font-size="14" font-weight="bold" fill="#111" textLength="50.12" lengthAdjust="spacingAndGlyphs">Settings</text>
<text x="564.74" y="45" font-size="14" font-weight="bold" fill="#111" textLength="28.98" lengthAdjust="spacingAndGlyphs">Help</text>
<text x="105.0" y="65" font-size="14.2" font-weight="normal" fill="#222" textLength="6.65" lengthAdjust="spacingAndGlyphs">T</text>
<text x="146.85" y="65" font-size="14.2" font-weight="normal" fill="#222" textLength="8.29" lengthAdjust="spacingAndGlyphs">5</text>
<text x="165.29" y="65" font-size="14.2" font-weight="normal" fill="#222" textLength="12.73" lengthAdjust="spacingAndGlyphs">10</text>
<text x="186.05" y="65" font-size="14.2" font-weight="normal" fill="#222" textLength="13.41" lengthAdjust="spacingAndGlyphs">15</text>
<text x="206.87" y="65" font-size="14.2" font-weight="normal" fill="#222" textLength="13.15" lengthAdjust="spacingAndGlyphs">30</text>
<text x="228.14" y="65" font-size="14.2" font-weight="normal" fill="#222" textLength="13.72" lengthAdjust="spacingAndGlyphs">1H</text>
<text x="248.9" y="65" font-size="14.2" font-weight="normal" fill="#222" textLength="14.51" lengthAdjust="spacingAndGlyphs">2H</text>
<text x="270.6" y="65" font-size="14.2" font-weight="normal" fill="#222" textLength="13.34" lengthAdjust="spacingAndGlyphs">4H</text>
<text x="291.02" y="65" font-size="14.2" font-weight="normal" fill="#222" textLength="14.17" lengthAdjust="spacingAndGlyphs">8H</text>
<text x="314.67" y="65" font-size="14.2" font-weight="normal" fill="#222" textLength="8.54" lengthAdjust="spacingAndGlyphs">D</text>
<text x="334.9" y="65" font-size="14.2" font-weight="normal" fill="#222" textLength="12.27" lengthAdjust="spacingAndGlyphs">W</text>
<text x="355.89" y="65" font-size="14.2" font-weight="normal" fill="#222" textLength="10.76" lengthAdjust="spacingAndGlyphs">M</text>
<text x="12.2" y="82" font-size="11" font-weight="normal" fill="#000" textLength="178.11" lengthAdjust="spacingAndGlyphs">WTI Crude 1. pos. , Daily, # 123 / 300</text>
<text x="50.4" y="692" font-size="11" font-weight="normal" fill="#6a6a6a" textLength="105.36" lengthAdjust="spacingAndGlyphs">Search for instrument</text>
<text x="202.0" y="693" font-size="12" font-weight="bold" fill="#111" textLength="144.83" lengthAdjust="spacingAndGlyphs">16 Jan 2014 19:00:00 EST</text>
</svg>
</body></html>
